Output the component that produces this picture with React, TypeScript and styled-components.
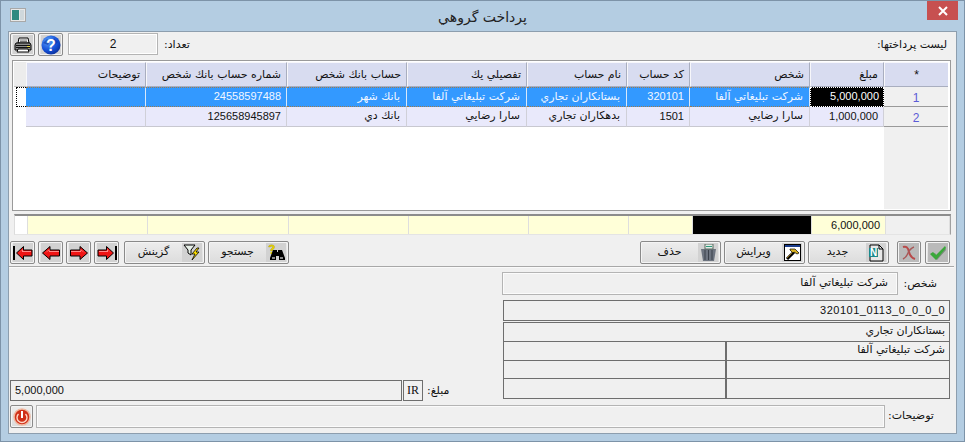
import React from "react";
import styled, { createGlobalStyle } from "styled-components";

const COLS = "12px 120px 141px 120px 120px 100px 63px 120px 74px 64px";
const FOOT_COLS = "13px 120px 141px 120px 120px 100px 64px 119px 74px 1fr";

const GlobalStyle = createGlobalStyle`
  html, body { margin: 0; padding: 0; background: #b4cde2; }
  body { font-family: "Liberation Sans", "DejaVu Sans", sans-serif; font-size: 11px; color: #111; }
`;

const Window = styled.div`
  width: 965px;
  height: 442px;
  box-sizing: border-box;
  background: #b4cde2;
  border: 1px solid #7d93a8;
  padding: 0 7px 7px;
  display: flex;
  flex-direction: column;
  position: relative;
`;

const TitleBar = styled.div`
  height: 30px;
  flex: none;
  display: flex;
  align-items: center;
  justify-content: center;
  position: relative;
`;

const TitleText = styled.div`
  font-family: "DejaVu Sans", sans-serif;
  font-size: 14px;
  color: #222;
  direction: rtl;
  margin-top: 2px;
`;

const AppIcon = styled.div`
  position: absolute;
  left: 2px;
  top: 7px;
`;

const CloseButton = styled.div`
  position: absolute;
  right: -1px;
  top: 0;
  width: 31px;
  height: 19px;
  background: #c75050;
  display: flex;
  align-items: center;
  justify-content: center;
`;

const Client = styled.div`
  flex: 1;
  box-sizing: border-box;
  background: #f0f0f0;
  border: 1px solid #8d9eae;
  padding: 1px 5px 0 1px;
  display: flex;
  flex-direction: column;
`;

const TopBar = styled.div`
  height: 22px;
  display: flex;
  align-items: flex-start;
  gap: 3px;
`;

const Button = styled.div<{ $w: number }>`
  width: ${(p) => p.$w}px;
  height: 21px;
  flex: none;
  border: 1px solid #8a8a8a;
  border-radius: 2px;
  background: linear-gradient(#ededed, #dcdcdc);
  box-shadow: inset 0 0 0 1px #f4f4f4;
  display: flex;
  align-items: center;
  justify-content: center;
`;

const TextButton = styled(Button)`
  justify-content: space-between;
  padding: 0 2px 0 0;
  width: ${(p) => p.$w - 2}px;
`;

const ButtonLabel = styled.span`
  font-family: "DejaVu Sans", sans-serif;
  font-size: 11px;
  direction: rtl;
  flex: 1;
  text-align: center;
  padding-bottom: 2px;
`;

const IconSlot = styled.div<{ $dim?: boolean }>`
  width: 20px;
  height: 19px;
  flex: none;
  background: ${(p) => (p.$dim ? "#bababa" : "#d2d2d2")};
  display: flex;
  align-items: center;
  justify-content: center;
`;

const Count = styled.div`
  width: 88px;
  height: 20px;
  margin-left: 2px;
  border: 1px solid #b4b4b4;
  box-shadow: inset 0 0 0 1px #fff;
  font-size: 12px;
  display: flex;
  align-items: center;
  justify-content: center;
`;

const Label = styled.span`
  font-family: "DejaVu Sans", sans-serif;
  font-size: 11px;
  direction: rtl;
  white-space: nowrap;
`;

const CountLabel = styled(Label)`
  margin: 5px 0 0 3px;
`;

const ListLabel = styled(Label)`
  margin: 5px 4px 0 auto;
`;

const GridFrame = styled.div`
  margin: 5px 0 0 2px;
  height: 151px;
  box-sizing: border-box;
  border: 1px solid #9a9a9a;
  padding: 1px;
  background: #fff;
  display: flex;
  flex-direction: column;
`;

const Row = styled.div`
  display: grid;
  grid-template-columns: ${COLS};
  height: 20px;
  flex: none;
`;

const HeadRow = styled(Row)`
  height: 25px;
`;

const Filler = styled.div`
  display: grid;
  grid-template-columns: ${COLS};
  flex: 1;
`;

const FillerSide = styled.div`
  grid-column: 10;
  background: #f0f0f0;
`;

const Cell = styled.div<{ $selected?: boolean }>`
  box-sizing: border-box;
  padding: 0 6px 2px 2px;
  display: flex;
  align-items: center;
  justify-content: flex-start;
  direction: rtl;
  white-space: nowrap;
  overflow: hidden;
  font-family: "DejaVu Sans", sans-serif;
  font-size: 11px;
  color: ${(p) => (p.$selected ? "#f2f7ff" : "#111")};
  background: ${(p) => (p.$selected ? "#3399ff" : "#e9e9fb")};
  border-right: 1px solid ${(p) => (p.$selected ? "#d8e8fa" : "#d0d0d8")};
  border-top: ${(p) => (p.$selected ? "1px dotted #9a7a50" : "none")};
  border-bottom: ${(p) => (p.$selected ? "1px dotted #9a7a50" : "1px solid #c8c8d0")};
`;

const NumberCell = styled(Cell)`
  font-family: "Liberation Sans", sans-serif;
  font-size: 11px;
  direction: ltr;
  justify-content: flex-end;
  padding-right: 5px;
`;

const ActiveCell = styled(NumberCell)`
  background: #000;
  color: #fff;
  border: 1px dotted #fff;
  padding-right: 4px;
`;

const HeaderCell = styled.div`
  box-sizing: border-box;
  padding: 0 5px 1px 2px;
  display: flex;
  align-items: center;
  justify-content: flex-start;
  direction: rtl;
  white-space: nowrap;
  font-family: "DejaVu Sans", sans-serif;
  font-size: 11px;
  background: #d8dcf0;
  border-right: 1px solid #a9aebf;
  border-bottom: 1px solid #a9aebf;
  border-left: 1px solid #f7f7fb;
  border-top: 1px solid #f7f7fb;
`;

const BlankHeader = styled.div`
  background: #ececec;
  border-bottom: 1px solid #c0c0c0;
`;

const Corner = styled.div`
  background: #d8dcf0;
  border-bottom: 1px solid #a9aebf;
  border-left: 1px solid #f7f7fb;
  border-top: 1px solid #f7f7fb;
  display: flex;
  align-items: center;
  justify-content: center;
  font-size: 12px;
`;

const RowGutter = styled.div<{ $focus?: boolean }>`
  box-sizing: border-box;
  margin-left: 2px;
  background: #fff;
  border: ${(p) => (p.$focus ? "1px dotted #000" : "none")};
  border-right: none;
`;

const RowNumber = styled.div`
  box-sizing: border-box;
  background: #f0f0f0;
  color: #5b5bd6;
  font-size: 12px;
  display: flex;
  align-items: center;
  justify-content: center;
  border-bottom: 1px solid #9a9a9a;
  padding-top: 2px;
`;

const Footer = styled.div`
  margin: 3px 0 0 4px;
  height: 21px;
  box-sizing: border-box;
  display: grid;
  grid-template-columns: ${FOOT_COLS};
  border-top: 2px solid #8c8c8c;
  border-right: 1px solid #a0a0a0;
  border-left: 1px solid #dcdcdc;
  border-bottom: 1px solid #e4e4e4;
`;

const FootCell = styled.div<{ $tone: "white" | "yellow" | "black" | "gray" }>`
  background: ${(p) =>
    ({ white: "#fff", yellow: "#ffffd8", black: "#000", gray: "#f0f0f0" })[p.$tone]};
  border-right: 1px solid #dedede;
  font-size: 11px;
  display: flex;
  align-items: center;
  justify-content: flex-end;
  padding-right: 5px;
`;

const ActionBar = styled.div`
  margin: 6px 1px 0 0;
  display: flex;
  align-items: center;
`;

const ButtonGroup = styled.div<{ $gap?: number; $before?: string }>`
  display: flex;
  gap: ${(p) => p.$gap ?? 3}px;
  margin-left: ${(p) => p.$before ?? "0"};
`;

const Divider = styled.div`
  margin: 2px -3px 0 -1px;
  height: 2px;
  flex: none;
  background: #a8a8a8;
  border-bottom: 1px solid #fafafa;
  box-sizing: border-box;
`;

const Details = styled.div`
  margin-top: 4px;
  height: 129px;
  display: flex;
  justify-content: space-between;
`;

const LeftPane = styled.div`
  width: 441px;
  align-self: flex-end;
  display: flex;
  align-items: center;
  height: 21px;
`;

const ReadOnly = styled.div`
  box-sizing: border-box;
  border: 1px solid #6e6e6e;
  height: 21px;
  display: flex;
  align-items: center;
`;

const AmountBox = styled(ReadOnly)`
  width: 392px;
  font-size: 11px;
  padding: 0 0 2px 4px;
`;

const CurrencyBox = styled(ReadOnly)`
  width: 20px;
  margin-left: 1px;
  justify-content: center;
  font-family: "Liberation Serif", serif;
  font-size: 12px;
`;

const AmountLabel = styled(Label)`
  margin-left: 4px;
`;

const RightPane = styled.div`
  width: 449px;
  display: flex;
  flex-direction: column;
`;

const PersonRow = styled.div`
  display: flex;
  height: 23px;
`;

const SoftInput = styled.div<{ $w: number }>`
  width: ${(p) => p.$w}px;
  height: 23px;
  flex: none;
  box-sizing: border-box;
  border: 1px solid #b4b4b4;
  box-shadow: inset 0 0 0 1px #fbfbfb;
  padding: 0 9px 3px 0;
  display: flex;
  align-items: center;
  justify-content: flex-start;
  direction: rtl;
  font-family: "DejaVu Sans", sans-serif;
  font-size: 11px;
`;

const PersonLabel = styled(Label)`
  margin: 5px 14px 0 auto;
`;

const CodeBox = styled(ReadOnly)`
  margin: 5px 0 0 1px;
  width: 447px;
  justify-content: flex-end;
  padding: 0 4px 1px 0;
  font-size: 11px;
  letter-spacing: 0.5px;
`;

const AccountTable = styled.div`
  margin: 1px 0 0 1px;
  width: 447px;
  height: 77px;
  box-sizing: border-box;
  border: 1px solid #6e6e6e;
  display: grid;
  grid-template-columns: 223px 1fr;
  grid-template-rows: repeat(4, 1fr);
`;

const AccountCell = styled.div<{ $wide?: boolean; $left?: boolean; $last?: boolean }>`
  grid-column: ${(p) => (p.$wide ? "1 / span 2" : "auto")};
  border-bottom: ${(p) => (p.$last ? "none" : "1px solid #6e6e6e")};
  border-right: ${(p) => (p.$left ? "2px solid #6e6e6e" : "none")};
  display: flex;
  align-items: center;
  justify-content: flex-start;
  padding: 0 4px 2px 0;
  direction: rtl;
  font-family: "DejaVu Sans", sans-serif;
  font-size: 11px;
`;

const DescRow = styled.div`
  margin-top: 4px;
  display: flex;
  align-items: flex-start;
  gap: 3px;
`;

const DescLabel = styled(Label)`
  margin: 4px 20px 0 auto;
`;

const Icon = styled.svg`
  display: block;
  flex: none;
`;

const PrinterIcon = () => (
  <Icon width="18" height="16" viewBox="0 0 18 16">
    <path d="M5 1h9l1 5H4z" fill="#f4f4f4" stroke="#000" />
    <path d="M6 3h7M6 4.500h7" stroke="#777" />
    <path d="M2 6h14l1 2v5H1V8z" fill="#8c8c8c" stroke="#000" />
    <path d="M2 8h14v1H2zM2 10h14v1H2z" fill="#111" />
    <path d="M4 12h10l1 3H3z" fill="#fff" stroke="#000" />
    <rect x="13" y="9" width="3" height="1" fill="#e6d640" />
  </Icon>
);

const HelpIcon = () => (
  <Icon width="20" height="20" viewBox="0 0 20 20">
    <defs>
      <radialGradient id="helpBall" cx="0.35" cy="0.3" r="0.8">
        <stop offset="0" stopColor="#5aa0f8" />
        <stop offset="0.6" stopColor="#1450d8" />
        <stop offset="1" stopColor="#0a2a90" />
      </radialGradient>
    </defs>
    <circle cx="10" cy="10" r="9.500" fill="url(#helpBall)" />
    <path d="M2 8l4-4 3 2-2 4zM13 3l4 4-3 3-3-3z" fill="#0a2f9c" opacity="0.55" />
    <text x="10" y="16" textAnchor="middle" fontFamily="Liberation Sans" fontWeight="700" fontSize="16" fill="#fff">?</text>
  </Icon>
);

const ArrowIcon = ({ flip, bar }: { flip?: boolean; bar?: boolean }) => (
  <Icon width="20" height="16" viewBox="0 0 20 16" style={flip ? { transform: "scaleX(-1)" } : undefined}>
    {bar ? (
      <>
        <rect x="0" y="1" width="2" height="14" fill="#000" />
        <path d="M3.500 8l7-6.500v3.500h8.500v6h-8.500v3.500z" fill="#f01414" stroke="#000" />
        <path d="M6 8l4-4v2h8v1h-9v-1.500z" fill="#ff8a8a" />
      </>
    ) : (
      <>
        <path d="M1.500 8l7.500-6.500v3.500h9.500v6h-9.500v3.500z" fill="#f01414" stroke="#000" />
        <path d="M4 8l4.500-4v2h9.500v1h-10v-1.500z" fill="#ff8a8a" />
      </>
    )}
  </Icon>
);

const FilterIcon = () => (
  <Icon width="18" height="17" viewBox="0 0 18 17">
    <path d="M1 1h11l-4 5v5l-3-2V6z" fill="#e8f0e8" stroke="#000" />
    <path d="M14 4l-5 6h3l-3 6 7-8h-3l3-4z" fill="#ffe000" stroke="#000" strokeWidth="0.8" />
  </Icon>
);

const BinocularIcon = () => (
  <Icon width="19" height="17" viewBox="0 0 19 17">
    <path d="M1.500 3c0-3 6-3 6 0 0 2-2 2-2 4H3.500c0-3 2-2.500 2-4 0-1-2-1-2 0z" fill="#e8d400" stroke="#8a7a00" strokeWidth="0.3" />
    <rect x="3.500" y="8" width="2" height="2" fill="#e8d400" />
    <path d="M6 6h4v2h1V6h4l3 8v2h-6v-4h-3v4H3v-2z" fill="#000" />
    <rect x="5" y="13" width="3" height="2" fill="#888" />
    <rect x="13" y="13" width="3" height="2" fill="#888" />
  </Icon>
);

const NoteIcon = () => (
  <Icon width="16" height="18" viewBox="0 0 16 18">
    <path d="M2 1h9l4 4v12H2z" fill="#e8e8e8" stroke="#000" />
    <path d="M11 1v4h4" fill="none" stroke="#000" />
    <rect x="1" y="4" width="9" height="9" fill="#1a8a8a" />
    <text x="5.500" y="12" textAnchor="middle" fontFamily="Liberation Sans" fontWeight="700" fontSize="10" fill="#fff">N</text>
  </Icon>
);

const HammerIcon = () => (
  <Icon width="17" height="17" viewBox="0 0 17 17">
    <rect x="0.500" y="0.500" width="16" height="16" fill="#fff" stroke="#000" />
    <rect x="1" y="1" width="15" height="2" fill="#1a3c8c" />
    <path d="M3 15l7-7" stroke="#000" strokeWidth="3" />
    <path d="M3 14l7-7" stroke="#8a6a10" strokeWidth="1" />
    <path d="M6 5h5l4 4-2 1-3-2-1 1-3-3z" fill="#d8b020" stroke="#000" strokeWidth="0.7" />
  </Icon>
);

const TrashIcon = () => (
  <Icon width="17" height="18" viewBox="0 0 17 18">
    <path d="M1 5h15l-2 12H3z" fill="#6d7480" />
    <path d="M5 6v10M8.500 6v10M12 6v10" stroke="#3a404a" />
    <rect x="5" y="0" width="8" height="5" fill="#e4ece6" stroke="#5a6a60" />
    <rect x="6" y="2" width="6" height="1" fill="#2a9a7a" />
  </Icon>
);

const CrossIcon = () => (
  <Icon width="18" height="18" viewBox="0 0 18 18">
    <path d="M3 3c3-1 5 0 6 5 1 4 3 6 6 7" fill="none" stroke="#b84a4a" strokeWidth="2" />
    <path d="M14 3c-3 1-5 4-6 6-1 3-3 5-5 6" fill="none" stroke="#a85a5a" strokeWidth="1.500" />
  </Icon>
);

const CheckIcon = () => (
  <Icon width="18" height="16" viewBox="0 0 18 16">
    <path d="M3 10l3-2 2 3 8-8 1 2-9 10z" fill="#7c8a7c" />
    <path d="M1 9l3-2 3 3 9-9 1 2-10 12z" fill="#3aa83a" />
  </Icon>
);

const PowerIcon = () => (
  <Icon width="18" height="18" viewBox="0 0 18 18">
    <circle cx="9" cy="9" r="8" fill="#d03018" stroke="#f0b8a0" strokeWidth="1.500" />
    <rect x="8" y="3" width="2" height="7" fill="#fff" />
    <path d="M5.500 6a5 5 0 1 0 7 0" fill="none" stroke="#ffd8c8" strokeWidth="1.400" />
  </Icon>
);

const payments = [
  { n: "1", amount: "5,000,000", person: "شركت تبليغاتي آلفا", code: "320101", account: "بستانكاران تجاري", detail: "شركت تبليغاتي آلفا", bank: "بانك شهر", number: "24558597488" },
  { n: "2", amount: "1,000,000", person: "سارا رضايي", code: "1501", account: "بدهكاران تجاري", detail: "سارا رضايي", bank: "بانك دي", number: "125658945897" },
];

const headers = ["توضيحات", "شماره حساب بانك شخص", "حساب بانك شخص", "تفصيلي يك", "نام حساب", "كد حساب", "شخص", "مبلغ"];

export default function App() {
  return (
    <>
      <GlobalStyle />
      <Window>
        <TitleBar>
          <AppIcon>
            <Icon width="16" height="14" viewBox="0 0 16 14">
              <rect x="0.500" y="0.500" width="15" height="13" fill="#e8e8e8" stroke="#a8a8a8" />
              <rect x="2" y="2" width="7" height="10" fill="#2f8a80" />
              <rect x="10" y="2" width="4" height="10" fill="#cfd8dc" />
            </Icon>
          </AppIcon>
          <TitleText>پرداخت گروهي</TitleText>
          <CloseButton>
            <Icon width="10" height="10" viewBox="0 0 10 10">
              <path d="M1 1l8 8M9 1l-8 8" stroke="#fff" strokeWidth="2" />
            </Icon>
          </CloseButton>
        </TitleBar>
        <Client>
          <TopBar>
            <Button $w={23}><IconSlot><PrinterIcon /></IconSlot></Button>
            <Button $w={23}><IconSlot><HelpIcon /></IconSlot></Button>
            <Count>2</Count>
            <CountLabel>تعداد:</CountLabel>
            <ListLabel>ليست پرداختها:</ListLabel>
          </TopBar>

          <GridFrame>
            <HeadRow>
              <BlankHeader />
              {headers.map((h) => (
                <HeaderCell key={h}>{h}</HeaderCell>
              ))}
              <Corner>*</Corner>
            </HeadRow>
            {payments.map((p, i) => {
              const selected = i === 0;
              return (
                <Row key={p.n}>
                  <RowGutter $focus={selected} />
                  <Cell $selected={selected} />
                  <NumberCell $selected={selected}>{p.number}</NumberCell>
                  <Cell $selected={selected}>{p.bank}</Cell>
                  <Cell $selected={selected}>{p.detail}</Cell>
                  <Cell $selected={selected}>{p.account}</Cell>
                  <NumberCell $selected={selected}>{p.code}</NumberCell>
                  <Cell $selected={selected}>{p.person}</Cell>
                  {selected ? <ActiveCell>{p.amount}</ActiveCell> : <NumberCell>{p.amount}</NumberCell>}
                  <RowNumber>{p.n}</RowNumber>
                </Row>
              );
            })}
            <Filler>
              <FillerSide />
            </Filler>
          </GridFrame>

          <Footer>
            <FootCell $tone="white" />
            <FootCell $tone="yellow" />
            <FootCell $tone="yellow" />
            <FootCell $tone="yellow" />
            <FootCell $tone="yellow" />
            <FootCell $tone="yellow" />
            <FootCell $tone="yellow" />
            <FootCell $tone="black" />
            <FootCell $tone="yellow">6,000,000</FootCell>
            <FootCell $tone="gray" />
          </Footer>

          <ActionBar>
            <ButtonGroup>
              <Button $w={23}><IconSlot><ArrowIcon bar /></IconSlot></Button>
              <Button $w={23}><IconSlot><ArrowIcon /></IconSlot></Button>
              <Button $w={23}><IconSlot><ArrowIcon flip /></IconSlot></Button>
              <Button $w={23}><IconSlot><ArrowIcon flip bar /></IconSlot></Button>
            </ButtonGroup>
            <ButtonGroup $before="5px">
              <TextButton $w={79}>
                <ButtonLabel>گزينش</ButtonLabel>
                <IconSlot><FilterIcon /></IconSlot>
              </TextButton>
              <TextButton $w={79}>
                <ButtonLabel>جستجو</ButtonLabel>
                <IconSlot><BinocularIcon /></IconSlot>
              </TextButton>
            </ButtonGroup>
            <ButtonGroup $before="auto">
              <TextButton $w={79}>
                <ButtonLabel>حذف</ButtonLabel>
                <IconSlot><TrashIcon /></IconSlot>
              </TextButton>
              <TextButton $w={79}>
                <ButtonLabel>ويرايش</ButtonLabel>
                <IconSlot><HammerIcon /></IconSlot>
              </TextButton>
              <TextButton $w={79}>
                <ButtonLabel>جديد</ButtonLabel>
                <IconSlot><NoteIcon /></IconSlot>
              </TextButton>
            </ButtonGroup>
            <ButtonGroup $before="8px" $gap={4}>
              <Button $w={22}><IconSlot $dim><CrossIcon /></IconSlot></Button>
              <Button $w={23}><IconSlot $dim><CheckIcon /></IconSlot></Button>
            </ButtonGroup>
          </ActionBar>

          <Divider />

          <Details>
            <LeftPane>
              <AmountBox>5,000,000</AmountBox>
              <CurrencyBox>IR</CurrencyBox>
              <AmountLabel>مبلغ:</AmountLabel>
            </LeftPane>
            <RightPane>
              <PersonRow>
                <SoftInput $w={396}>شركت تبليغاتي آلفا</SoftInput>
                <PersonLabel>شخص:</PersonLabel>
              </PersonRow>
              <CodeBox>320101_0113_0_0_0_0</CodeBox>
              <AccountTable>
                <AccountCell $wide>بستانكاران تجاري</AccountCell>
                <AccountCell $left />
                <AccountCell>شركت تبليغاتي آلفا</AccountCell>
                <AccountCell $left />
                <AccountCell />
                <AccountCell $left $last />
                <AccountCell $last />
              </AccountTable>
            </RightPane>
          </Details>

          <DescRow>
            <Button $w={21}><PowerIcon /></Button>
            <SoftInput $w={849} />
            <DescLabel>توضيحات:</DescLabel>
          </DescRow>
        </Client>
      </Window>
    </>
  );
}
